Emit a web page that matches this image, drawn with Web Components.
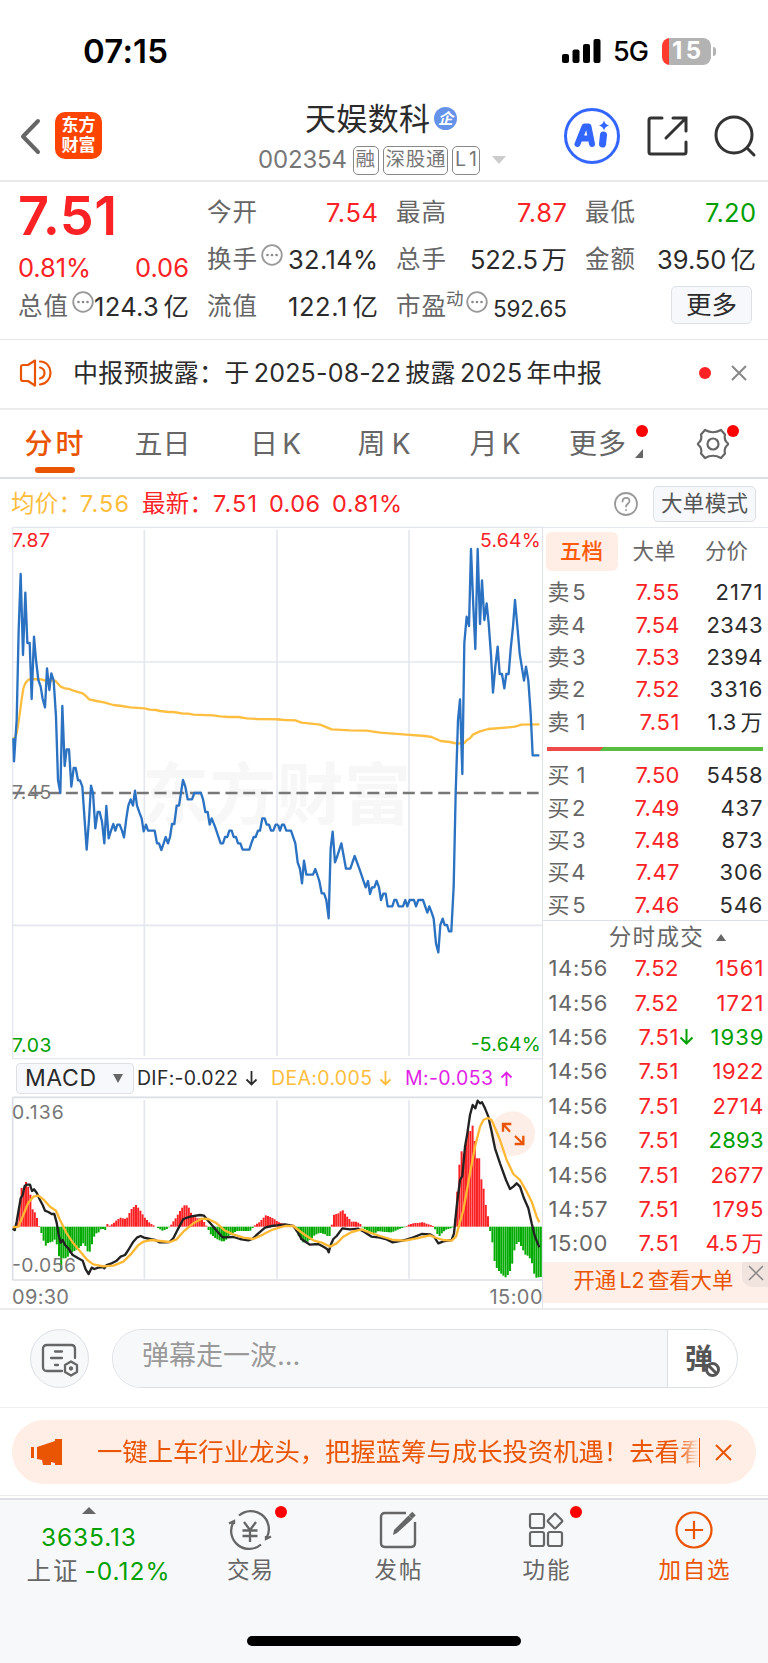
<!DOCTYPE html>
<html lang="zh-CN">
<head>
<meta charset="utf-8">
<title>天娱数科 002354</title>
<style>
    html, body { margin: 0; padding: 0; }
    body {
        --red: #fa2224;
        --green: #00a000;
        --orange: #ea5504;
        --grey: #666;
        --ink: #2b2b2b;
        --line: #e9e9eb;
        width: 768px;
        background: #fff;
        color: var(--ink);
        font-family: Inter, "Noto Sans CJK SC", sans-serif;
        font-size: 24px;
        line-height: 1;
    }
</style>
</head>
<body>
<status-bar></status-bar>
<stock-header></stock-header>
<quote-panel></quote-panel>
<notice-bar><fit-text w="527">中报预披露：于 2025-08-22 披露 2025 年中报</fit-text></notice-bar>
<chart-tabs></chart-tabs>
<price-summary></price-summary>
<market-view></market-view>
<comment-bar>弹幕走一波...</comment-bar>
<promo-strip>一键上车行业龙头，把握蓝筹与成长投资机遇！去看看</promo-strip>
<bottom-nav></bottom-nav>

<script>
class BaseElement extends HTMLElement {
    connectedCallback() {
        if (this.shadowRoot) return;
        this.attachShadow({mode: 'open'});
        this.shadowRoot.innerHTML = `<style>
            :host { display: block; box-sizing: border-box; }
            * { box-sizing: border-box; }
            svg { display: block; flex: none; fill: none; overflow: visible; }
            .row { display: flex; align-items: center; }
            .red { color: var(--red); }
            .green { color: var(--green); }
            .grey { color: var(--grey); }
            ${this.css()}
        </style>${this.html()}`;
    }
    css() { return ''; }
    html() { return ''; }
}

class StatusBar extends BaseElement {
    css() {
        return `
            :host { height: 90px; padding: 31px 52px 0 84px; }
            .row { justify-content: space-between; height: 40px; }
            .time { font-size: 33px; font-weight: 600; color: #000; }
            .net { font-size: 27px; font-weight: 500; color: #000; margin: 1px 14px 0 14px; }
            .battery {
                width: 49px; height: 27px; border-radius: 8px; margin-right: 7px;
                background: linear-gradient(90deg, #ff3b30 7px, #b3b3b3 7px);
                color: #fff; font-size: 24px; font-weight: 700;
                display: flex; align-items: center; justify-content: center;
            }
            .cap { width: 3px; height: 9px; margin-left: -5px; border-radius: 0 3px 3px 0; background: #b3b3b3; }
        `;
    }
    html() {
        return `
            <div class="row">
                <fit-text class="time" w="83">07:15</fit-text>
                <div class="row">
                    <svg width="38" height="24" fill="#000"><g fill="#000">
                        <rect y="15" width="7" height="9" rx="2"/><rect x="10.500" y="10.500" width="7" height="13.500" rx="2"/>
                        <rect x="21" y="5" width="7" height="19" rx="2"/><rect x="31.500" width="7" height="24" rx="2"/></g></svg>
                    <fit-text class="net" w="34">5G</fit-text>
                    <div class="battery"><fit-text w="27">15</fit-text></div><div class="cap"></div>
                </div>
            </div>`;
    }
}

class StockHeader extends BaseElement {
    css() {
        return `
            :host { height: 92px; border-bottom: 2px solid var(--line); padding-left: 20px; display: flex; }
            .back { margin: 29px 14px 0 0; }
            .logo {
                width: 47px; height: 47px; margin-top: 22px; border-radius: 10px; background: #ff4400;
                color: #fff; font-size: 17px; font-weight: 700; line-height: 20px; text-align: center; padding-top: 3px;
            }
            .mid { width: 250px; margin-left: 157px; display: flex; flex-direction: column; padding-top: 12px; }
            .name { height: 32px; padding-left: 47px; font-size: 31px; }
            .badge {
                width: 23px; height: 23px; border-radius: 50%; background: #6593ea; color: #fff; margin-left: 5px;
                font-size: 15px; font-weight: 700; font-style: italic; display: flex; align-items: center; justify-content: center;
            }
            .code { height: 30px; margin-top: 11px; color: #777; }
            .tag { font-size: 19.500px; border: 1.500px solid #888; border-radius: 5px; height: 29px; margin-right: 4px; flex: none; justify-content: center; }
            .tri { margin-left: 8px; }
            .tools { margin: 18px 0 0 55px; height: 56px; }
        `;
    }
    html() {
        return `
            <svg class="back" width="21" height="35" stroke="#666" stroke-width="4" stroke-linecap="round" stroke-linejoin="round"><path d="M18 2 3 17.500 18 33"/></svg>
            <div class="logo">东方<br>财富</div>
            <div class="mid">
                <div class="row name"><fit-text w="123">天娱数科</fit-text><div class="badge">企</div></div>
                <div class="row code">
                    <fit-text w="87" style="margin-right:7px">002354</fit-text>
                    <div class="row tag" style="width:26px"><fit-text w="19">融</fit-text></div><div class="row tag" style="width:65px"><fit-text w="58">深股通</fit-text></div><div class="row tag" style="width:28px"><fit-text w="20">L1</fit-text></div>
                    <svg class="tri" width="14" height="8"><path d="M0 0h14l-7 8z" fill="#ccc"/></svg>
                </div>
            </div>
            <div class="row tools">
                <svg width="56" height="56">
                    <circle cx="28" cy="28" r="26.500" stroke="#3366ff" stroke-width="3"/>
                    <path d="M13.500 36 20.500 18.500H24.500L28 36M17 30.500H27" stroke="#3366ff" stroke-width="6" stroke-linejoin="round" stroke-linecap="round"/>
                    <path d="M39.500 27 38.500 36" stroke="#3366ff" stroke-width="7" stroke-linecap="round"/><path d="M40 12.500q1 4 5 5-4 1-5 5-1-4-5-5 4-1 5-5z" fill="#3366ff"/>
                </svg>
                <svg width="40" height="40" style="margin-left:27px" stroke="#333" stroke-width="3" stroke-linecap="round">
                    <path d="M15 2H4Q2 2 2 4V36Q2 38 4 38H37Q39 38 39 36V26M26 2H39V15M39 2 19 22"/></svg>
                <svg width="42" height="42" style="margin-left:28px" stroke="#333" stroke-width="3" stroke-linecap="round">
                    <circle cx="19" cy="20" r="18"/><path d="M32 33l7 7"/></svg>
            </div>`;
    }
}

const moreDots = `<svg class="dots" width="22" height="22"><circle cx="11" cy="11" r="9.800" stroke="#999" stroke-width="1.800"/>
    <g fill="#888"><circle cx="6.500" cy="11" r="1.300"/><circle cx="11" cy="11" r="1.300"/><circle cx="15.500" cy="11" r="1.300"/></g></svg>`;

class QuotePanel extends BaseElement {
    css() {
        return `
            :host { height: 158px; border-bottom: 1.500px solid #e6e6e8; padding: 7px 14px 0 19px; }
            .grid { display: grid; grid-template-columns: repeat(4, 169px); grid-auto-rows: 47px; column-gap: 20px; }
            .grid > div { display: flex; align-items: center; justify-content: space-between; font-size: 25.500px; }
            .k { color: var(--grey); font-size: 24.500px; }
            .price { font-size: 54px; font-weight: 600; margin-top: 6px; }
            .change { padding-top: 16px; }
            .dots { margin: -10px 0 0 5px; }
            .tight { justify-content: flex-start !important; }
            .tight fit-text:last-child { margin-left: auto; }
            .sup { font-size: 17.500px; color: var(--grey); margin: -16px -3px 0 1px; }
            .btn { width: 81px; height: 38px; margin-right: 3px; border: 1.500px solid #dfe0e6; border-radius: 5px; background: #f7f8fb;
                display: flex; align-items: center; justify-content: center; margin-top: -3px; }
        `;
    }
    cell(label, value, w, cls = '') {
        return `<div><fit-text class="k" w="48">${label}</fit-text><fit-text class="${cls}" w="${w}">${value}</fit-text></div>`;
    }
    html() {
        return `<div class="grid">
            <div><fit-text class="price red" w="97">7.51</fit-text></div>
            ${this.cell('今开', '7.54', 50, 'red')}${this.cell('最高', '7.87', 48, 'red')}${this.cell('最低', '7.20', 49, 'green')}
            <div class="change red"><fit-text w="71">0.81%</fit-text><fit-text w="52">0.06</fit-text></div>
            <div class="tight"><fit-text class="k" w="48">换手</fit-text>${moreDots}<fit-text w="88">32.14%</fit-text></div>
            ${this.cell('总手', '522.5 万', 95)}${this.cell('金额', '39.50 亿', 97)}
            <div class="tight"><fit-text class="k" w="48">总值</fit-text>${moreDots}<fit-text w="93">124.3 亿</fit-text></div>
            ${this.cell('流值', '122.1 亿', 88)}
            <div class="tight"><fit-text class="k" w="48">市盈</fit-text><span class="sup">动</span>${moreDots}<fit-text w="72" style="font-size:22.500px;padding-top:6px">592.65</fit-text></div>
            <div style="justify-content:flex-end"><div class="btn"><fit-text w="49">更多</fit-text></div></div>
        </div>`;
    }
}

class NoticeBar extends BaseElement {
    css() {
        return `
            :host { height: 70px; border-bottom: 2px solid #ececee; padding: 0 21px 2px 20px; display: flex; align-items: center; font-size: 25px; }
            .text { margin-left: 22px; flex: 1; }
            .dot { width: 12px; height: 12px; border-radius: 50%; background: var(--red); margin-right: 20px; }
        `;
    }
    html() {
        return `
            <svg width="32" height="28" stroke="var(--orange)" stroke-width="2.200" stroke-linejoin="round" stroke-linecap="round">
                <path d="M15 1.500 8 6H3Q1 6 1 8V20Q1 22 3 22H8L15 26.500zM20 2.500C34 3 34 24 20 25.500M20 8.500C26 10 26 18 20 19.500"/></svg>
            <div class="text"><slot></slot></div>
            <div class="dot"></div>
            <svg width="16" height="16" stroke="#888" stroke-width="2"><path d="M1 1 15 15M15 1 1 15"/></svg>`;
    }
}

class ChartTabs extends BaseElement {
    css() {
        return `
            :host { height: 69px; border-bottom: 2px solid #dcdde5; color: var(--grey); font-size: 28px; }
            .tabs { display: grid; grid-template-columns: 108px 109px 117px 100px 122px 107px auto; height: 67px; justify-items: center; }
            .tab { display: flex; align-items: center; position: relative; height: 67px; }
            .on { color: var(--orange); font-weight: 500; }
            .on::after { content: ""; position: absolute; left: 9px; bottom: 4px; width: 40px; height: 6px; border-radius: 3px; background: var(--orange); }
            .dot { position: absolute; width: 12px; height: 12px; border-radius: 50%; background: #f00; top: 15px; }
            .corner { position: absolute; right: -18px; bottom: 19px; }
        `;
    }
    html() {
        return `<div class="tabs">
            <div class="tab on"><fit-text w="57">分时</fit-text></div>
            <div class="tab"><fit-text w="54">五日</fit-text></div>
            <div class="tab"><fit-text w="49">日 K</fit-text></div>
            <div class="tab"><fit-text w="51">周 K</fit-text></div>
            <div class="tab"><fit-text w="49">月 K</fit-text></div>
            <div class="tab" style="left:-12px"><fit-text w="55">更多</fit-text><i class="dot" style="right:-23px"></i>
                <svg class="corner" width="8" height="9"><path d="M8 0V9H0z" fill="#666"/></svg></div>
            <div class="tab" style="left:-3px">
                <svg width="32" height="32" viewBox="-16 -16 32 32" stroke="#666" stroke-width="2.200" stroke-linejoin="round">
                    <path d="M-8-14Q0-9.500 8-14L12-9.500Q10.500-4 15-.500V.500Q10.500 4 12 9.500L8 14Q0 9.500-8 14L-12 9.500Q-10.500 4-15 .500V-.500Q-10.500-4-12-9.500z"/><circle r="5.500"/></svg>
                <i class="dot" style="right:-10px"></i></div>
        </div>`;
    }
}

class PriceSummary extends BaseElement {
    css() {
        return `
            :host { height: 48px; padding: 1px 12px 0 12px; display: flex; align-items: center; font-size: 23.500px; }
            .avg { color: #febd3c; }
            .q { margin: 0 15px 0 auto; }
            .btn { width: 103px; height: 36px; border: 1.500px solid #dddfe4; border-radius: 5px; background: #f7f8fb; color: #555; font-size: 21.500px;
                display: flex; align-items: center; justify-content: center; }
        `;
    }
    html() {
        return `
            <fit-text class="avg" w="69">均价：</fit-text><fit-text class="avg" w="47">7.56</fit-text>
            <fit-text class="red" w="69" style="margin-left:15px">最新：</fit-text><fit-text class="red" w="42" style="margin-left:2px">7.51</fit-text>
            <fit-text class="red" w="49" style="margin-left:14px">0.06</fit-text><fit-text class="red" w="68" style="margin-left:14px">0.81%</fit-text>
            <svg class="q" width="24" height="24" stroke="#999" stroke-width="1.800" stroke-linecap="round"><circle cx="12" cy="12" r="11"/>
                <path d="M8.500 9.500C8.500 4.500 15.500 5 15.500 9.200 15.500 11.500 12 12 12 14.500M12 17.800v.2"/></svg>
            <div class="btn"><fit-text w="85">大单模式</fit-text></div>`;
    }
}

class MarketView extends BaseElement {
    css() {
        return `
            :host { height: 783px; border-bottom: 2px solid #ececee; display: flex; }
            .left { width: 542.500px; flex: none; border-right: 1.500px solid #e0e2e9; }
            .right { flex: 1; }
        `;
    }
    html() {
        return `<div class="left"><time-chart></time-chart><macd-legend></macd-legend><macd-chart></macd-chart></div>
            <div class="right"><order-book></order-book><tick-list></tick-list></div>`;
    }
}

// Both charts use viewBox units of a third of a pixel; the right half starts at 810.
class TimeChart extends BaseElement {
    css() {
        return `
            :host { height: 532px; padding-left: 12px; }
            text { font: 58px Inter, sans-serif; }
            .mark { font: 700 200px "Noto Sans CJK SC", sans-serif; fill: #f7f7f7; }
            .price { stroke: #2b72c2; stroke-width: 7; }
            .avg { stroke: #ffbe40; stroke-width: 7; }
        `;
    }
    html() {
        return `<svg width="530" height="532" viewBox="36 21 1590 1596">
            <text class="mark" x="427" y="896" textLength="805">东方财富</text>
            <g stroke="#e4e7ee" stroke-width="5">
                <path d="M38 22H1626M38 22V1616M38 1616H1626" stroke-width="4"/>
                <path d="M433 30V1608M831 30V1608M1227 30V1608M38 426H1626M38 1216H1626"/></g>
            <path d="M38 819H1616" stroke="#777" stroke-width="7.500" stroke-dasharray="36 17.200"/>
            <text x="36" y="81" textLength="114" fill="#fa2224">7.87</text>
            <text x="1440" y="81" textLength="182" fill="#fa2224">5.64%</text>
            <text x="36" y="838" textLength="118" fill="#777">7.45</text>
            <text x="36" y="1595" textLength="118" fill="#00a000">7.03</text>
            <text x="1412" y="1594" textLength="210" fill="#00a000">-5.64%</text>
            <g stroke-linejoin="round">
                <polyline class="avg" points="38,655 44,655 50,640 58,590 64,545 70,505 76,490 84,480 90,477 125,478 135,482 165,482 175,492 182,500 195,505 208,507 220,512 248,520 258,528 267,538 290,543 312,547 340,555 365,558 390,562 433,565 450,569 468,570 480,573 505,576 520,576 550,581 565,581 580,584 640,586 660,589 685,591 715,591 740,595 770,597 840,598"/>
                <polyline class="avg" transform="translate(810 0)" points="20,598 45,600 76,601 95,608 150,614 165,620 185,628 240,631 290,632 330,638 400,643 465,648 485,651 512,663 540,666 560,671 583,669 590,661 600,655 610,643 630,634 655,627 715,622 735,620 755,614 808,613"/>
                <polyline class="price" points="40,655 42,724 50,600 56,330 62,162 69,405 76,218 82,369 89,369 95,537 102,350 108,420 115,480 122,500 128,537 135,562 141,445 148,510 154,460 161,482 168,590 174,780 181,819 187,558 194,738 200,688 207,688 214,800 221,744 227,744 234,781 240,781 247,800 260,989 267,900 273,797 279,819 286,925 293,876 299,876 306,905 313,970 319,858 326,955 333,932 340,912 346,932 352,914 359,914 366,932 372,952 379,895 385,857 392,838 399,857 405,812 411,857 418,877 425,895 431,934 438,914 444,932 464,932 471,970 477,970 484,990 491,970 497,951 504,970 510,951 516,912 523,912 530,857 537,857 549,780 556,800 563,838 576,838 583,819 603,819 609,838 616,876 623,876 629,914 635,895 645,920 662,970 669,970 675,951 682,951 688,932 695,932 701,951 708,951 714,970 721,970 728,989 748,989 754,970 761,951 767,951 774,932 780,932 787,895 794,895 800,914 807,914 813,932 820,932 827,914 834,914"/>
                <polyline class="price" transform="translate(810 0)" points="24,914 30,932 36,914 42,914 49,932 63,932 76,970 83,1027 90,1047 96,1090 102,1022 109,1064 129,1064 136,1047 148,1083 155,1120 162,1120 169,1140 176,1195 182,985 188,935 195,1027 202,1008 214,970 228,1046 241,1046 254,1008 268,1046 287,1102 294,1083 300,1122 306,1102 313,1102 320,1083 327,1102 333,1140 340,1121 347,1121 353,1159 367,1159 373,1140 379,1140 386,1159 399,1159 406,1140 412,1159 419,1140 432,1140 438,1159 445,1140 459,1140 472,1178 478,1159 485,1178 491,1196 498,1270 505,1297 511,1215 518,1196 524,1215 531,1215 537,1234 544,1234 551,1100 557,820 564,600 570,538 577,762 583,369 590,290 597,318 603,87 610,260 616,387 623,87 630,312 636,181 643,300 650,250 656,310 663,405 669,518 676,440 683,380 689,462 696,462 703,505 709,462 716,462 722,388 729,320 735,240 742,318 749,400 762,482 768,440 775,482 782,580 788,706 808,706"/>
            </g>
        </svg>`;
    }
}

class MacdLegend extends BaseElement {
    css() {
        return `
            :host { height: 38px; padding: 1px 0 0 16px; display: flex; align-items: center; font-size: 19.500px; }
            .pick { width: 118px; height: 31px; border: 1.500px solid #dfe0e6; border-radius: 4px; background: #f7f8fb; font-size: 23px;
                display: flex; align-items: center; padding-left: 9px; margin-right: 4px; }
            .pick svg { margin-left: 18px; }
            .arrow { margin: 0 15px 0 9px; }
        `;
    }
    arrow(color, up) {
        return `<svg class="arrow" width="11" height="15" stroke="${color}" stroke-width="1.800"><path d="${up ? 'M5.500 15V1M.5 6.500l5-5 5 5' : 'M5.500 0V14M.5 8.500l5 5 5-5'}"/></svg>`;
    }
    html() {
        return `
            <div class="pick"><fit-text w="69">MACD</fit-text><svg width="10" height="9"><path d="M0 0h10l-5 9z" fill="#666"/></svg></div>
            <fit-text w="99">DIF:-0.022</fit-text>${this.arrow('#2b2b2b')}
            <fit-text w="99" style="color:#febd3c">DEA:0.005</fit-text>${this.arrow('#febd3c')}
            <fit-text w="86" style="color:#e01fe6">M:-0.053</fit-text>${this.arrow('#e01fe6', true)}`;
    }
}

class MacdChart extends BaseElement {
    // x,y knots of the histogram outline, the zero line is at 560
    #outline = [
        [38,566],[45,572],[52,545],[58,500],[66,434],[72,455],[79,421],[86,445],[92,467],[99,517],[106,517],[112,537],[118,560],[125,582],[131,603],[138,618],[145,607],[155,607],[165,598],[172,618],[178,655],[184,692],[190,655],[200,655],[210,640],[225,632],[240,622],[250,610],[258,620],[265,640],[272,632],[278,604],[285,582],[295,578],[305,565],[316,570],[322,552],[330,558],[345,545],[360,533],[380,537],[392,510],[408,495],[420,510],[432,530],[445,545],[460,556],[475,565],[488,572],[505,565],[515,552],[530,530],[545,505],[556,493],[565,500],[575,522],[590,535],[605,535],[615,550],[622,562],[632,583],[650,597],[665,604],[675,604],[690,585],[710,573],[750,573],[765,555],[780,545],[797,526],[815,532],[830,543],
        [840,548],[860,553],[880,556],[890,575],[900,595],[910,608],[922,606],[935,595],[945,585],[960,578],[975,583],[988,592],[994,560],[1002,524],[1015,520],[1027,509],[1040,528],[1055,545],[1070,545],[1082,553],[1090,565],[1110,575],[1125,580],[1135,573],[1155,576],[1175,577],[1195,568],[1215,561],[1225,554],[1240,550],[1270,547],[1285,553],[1300,558],[1308,572],[1316,592],[1325,580],[1340,568],[1358,563],[1365,537],[1371,463],[1377,383],[1384,331],[1390,350],[1398,300],[1405,270],[1410,277],[1417,252],[1423,290],[1430,355],[1438,355],[1443,414],[1450,440],[1456,488],[1463,521],[1468,560],[1477,605],[1483,660],[1490,683],[1500,697],[1516,713],[1528,700],[1537,670],[1545,620],[1555,603],[1567,625],[1575,643],[1585,648],[1595,665],[1605,713],[1626,711]];

    css() {
        return `
            :host { height: 211px; padding-left: 12px; }
            text { font: 58px Inter, sans-serif; fill: #777; }
            .dif { stroke: #222; stroke-width: 7; }
            .dea { stroke: #ffb833; stroke-width: 7; }
            .axis { display: flex; justify-content: space-between; font-size: 20px; color: #777; padding: 6px 0 0 1px; }
        `;
    }
    #bars() {
        let html = '';
        for (let x = 45, k = 0; x < 1626; x += 6.6) {
            while (this.#outline[k + 1][0] < x) k++;
            const [x0, y0] = this.#outline[k];
            const [x1, y1] = this.#outline[k + 1];
            const y = y0 + (y1 - y0) * (x - x0) / (x1 - x0);
            html += `<path d="M${x.toFixed(1)} 560V${y.toFixed(0)}" stroke="${y < 560 ? '#fa2224' : '#0a0'}"/>`;
        }
        return html;
    }
    html() {
        return `<svg width="530" height="184" viewBox="36 171 1590 552">
            <g stroke="#e4e7ee" stroke-width="5"><path d="M433 180V716M831 180V716M1227 180V716"/>
                <path d="M38 172H1626M38 172V720M38 720H1626" stroke="#dcdee6"/></g>
            <g stroke-width="6">${this.#bars()}</g>
            <circle cx="1538" cy="281" r="67" fill="#fdeae1" fill-opacity=".8"/>
            <text x="36" y="236" textLength="155">0.136</text><text x="36" y="697" textLength="192">-0.056</text>
            <g stroke-linejoin="round">
                <polyline class="dif" points="38,565 44,570 50,545 56,510 62,475 68,465 74,438 80,434 90,434 96,453 102,448 110,458 120,480 128,495 135,512 145,516 155,522 163,522 170,548 176,585 182,608 188,600 195,615 205,625 218,645 235,655 248,662 257,688 266,702 275,683 283,687 295,683 310,681 313,685 320,675 335,670 350,662 362,650 375,645 385,630 400,605 412,592 422,588 432,593 450,597 465,600 478,607 495,607 508,606 520,595 535,565 550,537 570,530 600,525 612,527 625,543 640,560 655,578 668,592 700,591 720,597 745,601 757,597 775,580 795,563 815,558 830,556"/>
                <polyline class="dif" transform="translate(810 0)" points="20,556 45,553 70,558 82,575 95,598 120,614 145,612 163,622 172,628 176,637 182,615 190,597 200,588 217,565 240,568 265,566 282,575 305,590 330,593 350,598 368,607 385,604 405,600 430,592 455,582 480,583 492,590 505,610 520,604 545,600 552,580 560,500 570,420 577,408 585,320 592,280 600,225 608,195 616,205 623,182 630,190 636,187 645,205 655,230 665,275 675,325 690,370 708,420 720,447 730,440 740,430 750,440 762,475 775,505 785,550 795,590 808,622"/>
                <polyline class="dea" points="38,562 55,560 70,525 85,488 100,470 115,467 130,478 150,500 168,512 180,540 200,580 220,610 245,640 262,660 280,673 310,679 340,677 370,665 395,640 415,615 430,605 455,600 480,603 510,606 530,598 550,575 580,550 605,536 625,537 650,550 675,572 700,583 730,593 760,597 790,583 815,570 830,565"/>
                <polyline class="dea" transform="translate(810 0)" points="20,565 45,558 70,558 85,570 105,585 130,601 155,608 180,620 200,610 220,590 245,576 275,568 300,578 330,588 370,600 405,602 440,595 480,586 500,594 520,600 545,602 558,590 580,510 600,400 615,320 630,260 640,240 653,234 665,240 690,300 710,360 730,402 750,420 770,455 785,485 800,530 808,547"/>
            </g>
            <path d="M1509 275V252H1534M1509 252 1530 275M1570 287V312H1544M1570 312 1545 288" stroke="var(--orange)" stroke-width="7"/>
        </svg>
        <div class="axis"><fit-text w="55">09:30</fit-text><fit-text w="51">15:00</fit-text></div>`;
    }
}

class OrderBook extends BaseElement {
    css() {
        return `
            :host { height: 394px; border-top: 1.500px solid #e4e7ee; border-bottom: 1.500px solid #dfe1e8; padding: 4px 5px 0 3px; font-size: 22px; }
            .tabs { display: grid; grid-template-columns: 72px 73px 72px; height: 39px; align-items: center; justify-items: center; color: var(--grey); margin-bottom: 5px; font-size: 21.500px; }
            .on { background: #feeee6; border-radius: 6px; width: 72px; height: 39px; color: #ff5a0a; font-weight: 500; display: flex; align-items: center; justify-content: center; }
            .level { display: grid; grid-template-columns: 60px 70px 83px; height: 32.350px; align-items: center; justify-items: end; padding-left: 3px; }
            .level :first-child { justify-self: start; color: var(--grey); }
            .bar { height: 4.500px; margin: 9px 0 8px 1px; background: linear-gradient(135deg, #ee4a4a 40px, #58bd40 40px); }
        `;
    }
    level(name, price, pw, volume, vw) {
        return `<div class="level"><fit-text w="36">${name}</fit-text><fit-text class="red" w="${pw}">${price}</fit-text><fit-text w="${vw}">${volume}</fit-text></div>`;
    }
    html() {
        const sells = [['卖 5', '7.55', 42, '2171', 45], ['卖 4', '7.54', 42, '2343', 54], ['卖 3', '7.53', 42, '2394', 54], ['卖 2', '7.52', 42, '3316', 51], ['卖 1', '7.51', 38, '1.3 万', 53]];
        const buys = [['买 1', '7.50', 42, '5458', 54], ['买 2', '7.49', 43, '437', 40], ['买 3', '7.48', 43, '873', 39], ['买 4', '7.47', 42, '306', 41], ['买 5', '7.46', 43, '546', 41]];
        return `
            <div class="tabs"><div class="on">五档</div><div>大单</div><div>分价</div></div>
            ${sells.map(l => this.level(...l)).join('')}
            <div class="bar"></div>
            ${buys.map(l => this.level(...l)).join('')}`;
    }
}

class TickList extends BaseElement {
    css() {
        return `
            :host { font-size: 22px; }
            .title { height: 30px; justify-content: center; color: var(--grey); font-size: 22.500px; padding: 3px 0 0 25px; }
            .title svg { margin-left: 14px; }
            .tick { display: grid; grid-template-columns: 60px 68px 15px 70px; height: 34.400px; align-items: center; justify-items: end; padding-left: 7px; }
            .tick :first-child { justify-self: start; color: var(--grey); }
            .l2 { height: 41px; background: #feefe8; color: var(--orange); display: flex; justify-content: space-between; font-size: 21.500px; padding-left: 32px; margin-top: 1px; }
            .l2 > fit-text { align-self: center; margin-top: -2px; }
            .x { width: 26px; height: 25px; background: #f1e4de; border-radius: 0 0 0 10px; padding: 4px 0 0 7px; }
        `;
    }
    html() {
        const ticks = [['14:56', '7.52', 1561, 46], ['14:56', '7.52', 1721, 45], ['14:56', '7.51', 1939, 51, 'green'], ['14:56', '7.51', 1922, 49], ['14:56', '7.51', 2714, 49],
            ['14:56', '7.51', 2893, 53, 'green'], ['14:56', '7.51', 2677, 51], ['14:57', '7.51', 1795, 49], ['15:00', '7.51', '4.5 万', 56]];
        const down = '<svg width="13" height="16" stroke="#00a000" stroke-width="2"><path d="M6.500 0V15M.5 8.500l6 6 6-6"/></svg>';
        const rows = ticks.map(([time, price, volume, w, cls = 'red']) => `<div class="tick">
            <fit-text w="57">${time}</fit-text><fit-text class="red" w="${price === '7.52' ? 42 : 38}">${price}</fit-text>
            ${volume === 1939 ? down : '<i></i>'}<fit-text class="${cls}" w="${w}">${volume}</fit-text></div>`);
        return `
            <div class="row title"><fit-text w="92">分时成交</fit-text><svg width="10" height="7"><path d="M0 7h10L5 0z" fill="#666"/></svg></div>
            ${rows.join('')}
            <div class="l2"><fit-text w="158">开通 L2 查看大单</fit-text><div class="x">
                <svg width="14" height="14" stroke="#888" stroke-width="1.500"><path d="M0 0 14 14M14 0 0 14"/></svg></div></div>`;
    }
}

class CommentBar extends BaseElement {
    css() {
        return `
            :host { height: 98px; border-bottom: 1px solid #f0f0f0; padding: 19px 30px 0 30px; display: flex; }
            .set { width: 59px; height: 59px; border-radius: 50%; border: 1.500px solid #dcdfe5; background: #f7f8fa; margin-right: 23px; padding: 14px 0 0 11px; }
            .field { flex: 1; height: 59px; border: 1.500px solid #dcdfe5; border-radius: 30px; display: flex; overflow: hidden; }
            .input { flex: 1; background: #f7f8fa; border-right: 1.500px solid #dcdfe5; color: #999; font-size: 27px; padding: 12px 0 0 29px; }
            .send { width: 69px; display: flex; align-items: center; justify-content: flex-start; padding-left: 17px; color: #555; font-size: 28px; font-weight: 700; }
            .send svg { margin: 21px 0 0 -8px; }
        `;
    }
    html() {
        return `
            <div class="set"><svg width="36" height="33" stroke="#666" stroke-width="2.300" stroke-linecap="round">
                <path d="M20 27H5Q1 27 1 23V5Q1 1 5 1H29Q33 1 33 5V14M13 7.500H20M9 14H20M13 21H16"/>
                <path d="M29 17.500l6 3.500v7l-6 3.500-6-3.500v-7z" stroke-linejoin="round"/><circle cx="29" cy="24.500" r="1" fill="#666"/></svg></div>
            <div class="field"><div class="input"><slot></slot></div>
                <div class="send">弹<svg width="15" height="15" stroke="#555" stroke-width="3"><circle cx="7.500" cy="7.500" r="6" fill="#fff"/><path d="M3.500 3.500l8 8"/></svg></div></div>`;
    }
}

class PromoStrip extends BaseElement {
    css() {
        return `
            :host { height: 88px; border-bottom: 1.500px solid #ebebed; padding: 12px 12px 0 12px; }
            .pill { height: 64px; border-radius: 32px; background: #feeee6; color: var(--orange); padding: 0 24px 0 19px; }
            .text { width: 603px; margin-left: 34px; overflow: hidden; white-space: nowrap; font-size: 25.350px; line-height: 32px;
                -webkit-mask: linear-gradient(90deg, #000 582px, transparent 602px); }
            .bar { width: 1.500px; height: 29px; background: var(--orange); margin-right: 15px; }
        `;
    }
    html() {
        return `<div class="row pill">
            <svg width="32" height="27"><path d="M0 8h3v11H0zM6 8 24 2V0H31V26H24V24L20 23V26H12L11 21 6 20z" fill="var(--orange)"/></svg>
            <div class="text"><slot></slot></div><div class="bar"></div>
            <svg width="17" height="17" stroke="var(--orange)" stroke-width="2"><path d="M1 1 16 16M16 1 1 16"/></svg>
        </div>`;
    }
}

class BottomNav extends BaseElement {
    css() {
        return `
            :host { height: 167px; border-top: 2px solid #fff; background: #f7f8fa; color: var(--grey); }
            .items { border-top: 2px solid #dfe0e5; display: grid; grid-template-columns: 176px 148px 148px 148px 148px; height: 92px; }
            .index { padding: 7px 0 0 1px; display: flex; flex-direction: column; align-items: center; font-size: 24.500px; }
            .index > fit-text { margin: 11px 0 9px; }
            .index .row { padding-left: 19px; }
            .item { display: flex; flex-direction: column; align-items: center; position: relative; padding-top: 11px; font-size: 22.500px; }
            .item svg { margin-bottom: 10px; }
            .dot { position: absolute; left: 99px; top: 6px; width: 12px; height: 12px; border-radius: 50%; background: #f00; }
            .add { color: var(--orange); }
            .home { width: 274px; height: 10px; border-radius: 5px; background: #000; margin: 46px 0 0 247px; }
        `;
    }
    html() {
        return `<div class="items">
            <div class="index"><svg width="14" height="7"><path d="M0 7h14L7 0z" fill="#666"/></svg>
                <fit-text class="green" w="93">3635.13</fit-text>
                <div class="row"><fit-text w="49">上证</fit-text><fit-text class="green" w="83" style="margin-left:9px">-0.12%</fit-text></div></div>
            <div class="item"><svg width="42" height="38" stroke="#666" stroke-width="2.300">
                <path d="M10 4.500A18 18 0 0 1 38 26M32 33.500A18 18 0 0 1 4 12M0 12.500l5-2.500v3M42 25.500l-5 2.500v-3"/><path d="M15 11l6 8 6-8M13.500 19.500h15M13.500 25h15M21 19v12"/></svg>
                <fit-text w="44">交易</fit-text><i class="dot" style="left:99px"></i></div>
            <div class="item"><svg width="36" height="38" stroke="#666" stroke-width="2.400">
                <path d="M26 2H5Q1 2 1 6V32Q1 36 5 36H31Q35 36 35 32V11"/><path d="M13 24l1-5L28.500 4.500l4 3.500L17 22z" fill="#666" stroke="none"/><path d="M30.500 6 34 2.500" stroke-width="5"/></svg>
                <fit-text w="45">发帖</fit-text></div>
            <div class="item"><svg width="34" height="38" stroke="#666" stroke-width="2.200">
                <rect x="1" y="3" width="14" height="14" rx="2"/><rect x="1" y="21" width="14" height="14" rx="2"/><rect x="19" y="21" width="14" height="14" rx="2"/>
                <rect x="20.500" y="4.500" width="11" height="11" rx="1.500" transform="rotate(45 26 10)"/></svg>
                <fit-text w="45">功能</fit-text><i class="dot" style="left:98px"></i></div>
            <div class="item add"><svg width="38" height="38" stroke="var(--orange)" stroke-width="2.200"><circle cx="19" cy="19" r="17.500"/><path d="M10 19h18M19 10v18"/></svg>
                <fit-text w="69">加自选</fit-text></div>
        </div>
        <div class="home"></div>`;
    }
}

// Spreads its text over the width given in "w" by letter spacing.
// The span hangs over by a pixel on each side for the side bearings of the glyphs.
class FitText extends HTMLElement {
    connectedCallback() {
        if (this.shadowRoot) return;
        this.attachShadow({mode: 'open'});
        this.shadowRoot.innerHTML = `<style>
            :host { display: block; flex: none; white-space: nowrap; }
            span { display: block; width: max-content; margin-left: -1px; word-spacing: -.12em; }
        </style><span><slot></slot></span>`;
        const span = this.shadowRoot.querySelector('span');
        const want = Number(this.getAttribute('w'));
        const gaps = this.textContent.length - 1;
        const spacing = (want + 2 - span.getBoundingClientRect().width) / Math.max(gaps, 1);
        span.style.letterSpacing = spacing + 'px';
        this.style.width = want + 'px';
    }
}

customElements.define('status-bar', StatusBar);
customElements.define('stock-header', StockHeader);
customElements.define('quote-panel', QuotePanel);
customElements.define('notice-bar', NoticeBar);
customElements.define('chart-tabs', ChartTabs);
customElements.define('price-summary', PriceSummary);
customElements.define('market-view', MarketView);
customElements.define('time-chart', TimeChart);
customElements.define('macd-legend', MacdLegend);
customElements.define('macd-chart', MacdChart);
customElements.define('order-book', OrderBook);
customElements.define('tick-list', TickList);
customElements.define('comment-bar', CommentBar);
customElements.define('promo-strip', PromoStrip);
customElements.define('bottom-nav', BottomNav);
customElements.define('fit-text', FitText);
</script>
</body>
</html>
